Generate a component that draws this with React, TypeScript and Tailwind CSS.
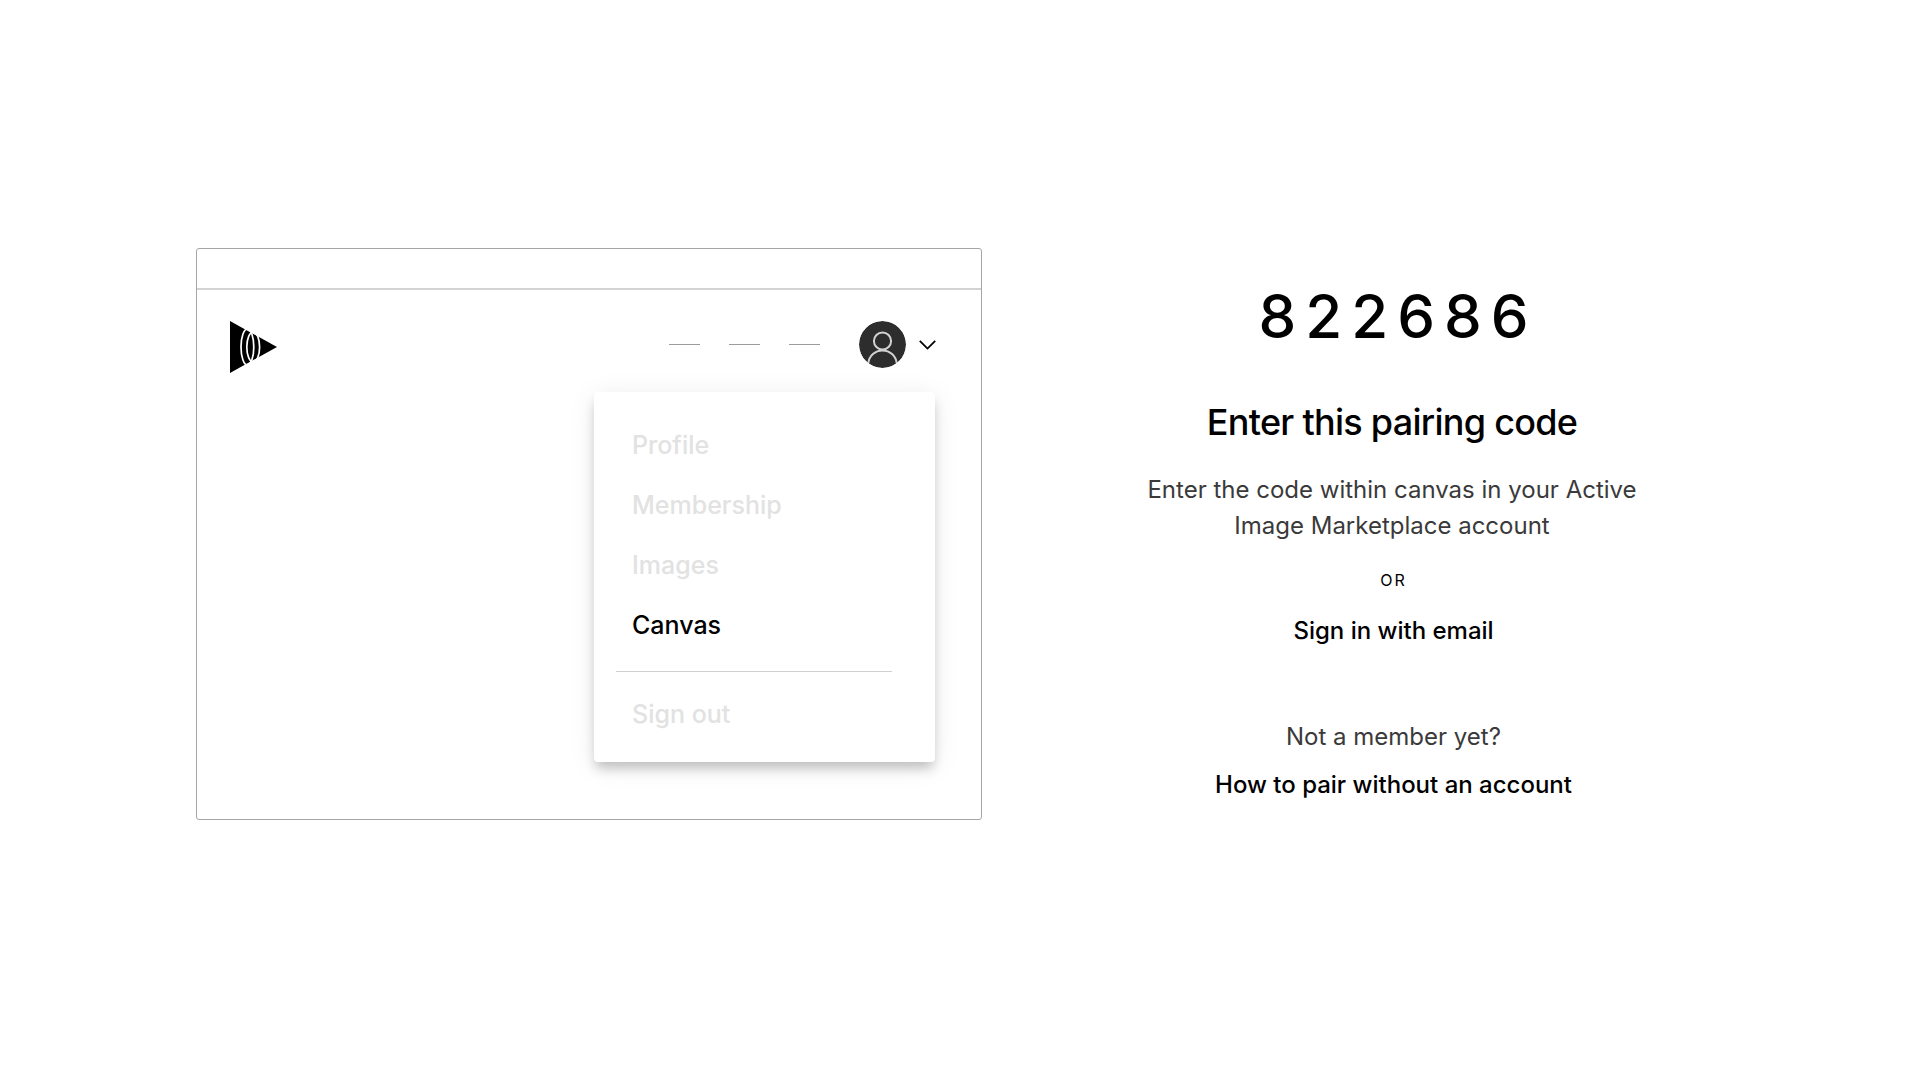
const menuItems = [
  { label: "Profile", active: false },
  { label: "Membership", active: false },
  { label: "Images", active: false },
  { label: "Canvas", active: true },
];

function Logo() {
  return (
    <svg className="w-[47px] h-[52px]" viewBox="0 0 47 52" fill="none" aria-hidden="true">
      <path d="M0 0L47 26L0 52Z" fill="#000" />
      <ellipse cx="17.4" cy="26" rx="6.4" ry="18" stroke="#fff" strokeWidth="1.7" />
      <ellipse cx="23.2" cy="26" rx="6.4" ry="15" stroke="#fff" strokeWidth="1.7" />
    </svg>
  );
}

function Avatar() {
  return (
    <svg className="w-[47px] h-[47px] rounded-full" viewBox="0 0 47 47" fill="none" aria-hidden="true">
      <circle cx="23.5" cy="23.5" r="23.5" fill="#2d2d2d" />
      <circle cx="23.5" cy="20" r="8.6" stroke="#d2d2d2" strokeWidth="2" />
      <path d="M9.3 42.2C10.2 34.8 16 29.4 23.5 29.4S36.8 34.8 37.7 42.2" stroke="#d2d2d2" strokeWidth="2" />
    </svg>
  );
}

function Chevron() {
  return (
    <svg className="w-[17px] h-[10px]" viewBox="0 0 17 10" fill="none" aria-hidden="true">
      <path d="M0.8 0.9L8.5 8.6L16.2 0.9" stroke="#000" strokeWidth="1.8" />
    </svg>
  );
}

function BrowserPreview() {
  return (
    <div className="rounded-[3px] border border-[#a6a6a6] pb-[57px]">
      <div className="h-[41px] border-b-2 border-[#d3d3d3]" />

      {/* top bar */}
      <div className="flex items-start justify-between pl-[33px] pr-[45px] pt-[31px]">
        <Logo />
        <div className="flex items-center">
          <div className="flex gap-[29px] mr-[39px]">
            <span className="w-[31px] h-px bg-[#9c9c9c]" />
            <span className="w-[31px] h-px bg-[#9c9c9c]" />
            <span className="w-[31px] h-px bg-[#9c9c9c]" />
          </div>
          <button type="button" aria-label="Account menu" className="flex items-center gap-[13px]">
            <Avatar />
            <Chevron />
          </button>
        </div>
      </div>

      {/* account menu */}
      <nav className="ml-auto mr-[46px] mt-[19px] w-[341px] rounded-[4px] bg-white pt-[23px] pb-[18px] text-[25px] font-medium shadow-[0_8px_12px_-2px_rgba(0,0,0,0.22),0_4px_28px_rgba(0,0,0,0.08)]">
        {menuItems.map((item) => (
          <a
            key={item.label}
            href="#"
            className={`block pl-[38px] leading-[60px] ${item.active ? "text-black" : "text-[#e2e2e2]"}`}
          >
            {item.label}
          </a>
        ))}
        <hr className="ml-[22px] mr-[43px] mt-4 mb-3 border-0 h-px bg-[#d0d0d0]" />
        <a href="#" className="block pl-[38px] leading-[60px] text-[#e2e2e2]">
          Sign out
        </a>
      </nav>
    </div>
  );
}

function PairingPanel() {
  return (
    <div className="flex flex-col items-center pt-[14px] text-center text-2xl">
      <p className="pl-3 text-[60px] leading-[72px] font-medium tracking-[9px]">822686</p>
      <h1 className="mt-[46px] text-4xl leading-[48px] font-medium tracking-[-0.02em]">Enter this pairing code</h1>
      <p className="mt-[26px] max-w-[500px] leading-9 text-[#3a3a3a]">
        Enter the code within canvas in your Active Image Marketplace account
      </p>
      <div className="mt-6 flex flex-col items-center pl-[3px]">
        <span className="text-base leading-6 tracking-[2px]">OR</span>
        <a href="#" className="mt-[21px] leading-9 font-medium">
          Sign in with email
        </a>
        <p className="mt-[70px] leading-9 text-[#3a3a3a]">Not a member yet?</p>
        <a href="#" className="mt-3 leading-9 font-medium">
          How to pair without an account
        </a>
      </div>
    </div>
  );
}

export default function App() {
  return (
    <main className="min-h-screen bg-white text-black font-['Inter',sans-serif] flex items-center px-[196px] pb-3">
      <div className="grid w-full grid-cols-[786fr_664fr] items-center gap-[78px]">
        <BrowserPreview />
        <PairingPanel />
      </div>
    </main>
  );
}
